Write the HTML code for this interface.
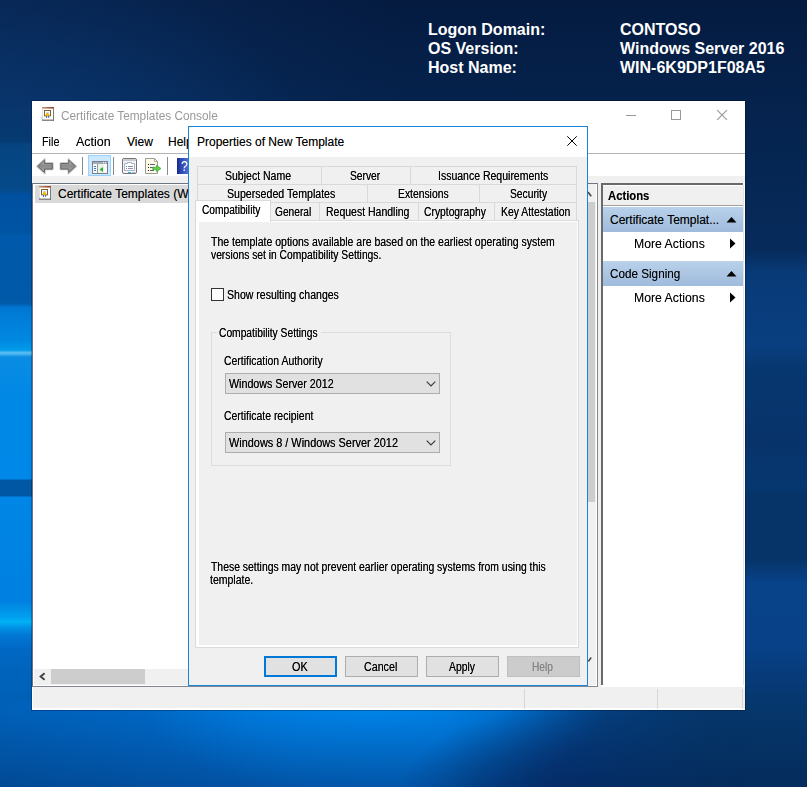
<!DOCTYPE html>
<html><head><meta charset="utf-8"><title>Certificate Templates Console</title>
<style>
*{box-sizing:border-box;margin:0;padding:0}
html,body{width:807px;height:787px;overflow:hidden}
body{position:relative;font-family:"Liberation Sans",sans-serif;font-size:12px;color:#000;background:#0a3a78}
.a{position:absolute}
.t{position:absolute;white-space:nowrap;transform-origin:0 0;line-height:1}
#bg{left:0;top:0;width:807px;height:787px;overflow:hidden}
/* BGInfo */
.bgi{font-weight:bold;font-size:16px;color:#fff;line-height:19px}
/* main window */
#win{left:32px;top:101px;width:713px;height:609px;background:#f0f0f0;box-shadow:0 0 0 1px rgba(0,5,30,.28)}
.seg{font-size:12px;text-shadow:0 0 0 rgba(0,0,0,.45)}
/* dialog */
#dlg{left:188px;top:126px;width:400px;height:560px;background:#f0f0f0;border:1px solid #1883d7}
.d{font-size:12px;transform:scaleX(.875);text-shadow:0 0 0 rgba(0,0,0,.75)}
.tab{position:absolute;height:19px;background:#f0f0f0;border:1px solid #d9d9d9;border-bottom:none}
.btn{position:absolute;top:656px;height:21px;width:73px;background:#e1e1e1;border:1px solid #adadad}
.combo{position:absolute;left:225px;width:215px;height:21px;background:#e1e1e1;border:1px solid #adadad}
</style></head><body>
<div id="bg" class="a">
<div class="a" style="left:0;top:0;width:807px;height:787px;background:linear-gradient(to bottom,#051b40 0,#05224c 100px,#062b5b 250px,#083a77 272px,#093f80 345px,#07376f 368px,#07336a 440px,#073770 489px,#063368 493px,#063469 560px,#084288 582px,#084187 650px,#073b7b 672px,#06376c 705px,#052c5c 787px)"></div>
<div class="a" style="left:0;top:0;width:420px;height:102px;background:linear-gradient(to right,rgba(16,76,150,.2) 0,rgba(16,76,150,.12) 200px,rgba(16,76,150,0) 400px),radial-gradient(ellipse 330px 230px at 0 190px,rgba(14,84,160,.42) 0,rgba(14,84,160,.22) 45%,rgba(14,84,160,0) 100%)"></div>
<div class="a" style="left:0;top:101px;width:34px;height:686px;background:linear-gradient(to bottom,#09346b 0,#06386f 25px,#053a72 40px,#064480 44px,#054a8a 89px,#0050a0 94px,#0054a4 131px,#0059aa 135px,#005aa8 202px,#0078d4 207px,#0088e0 239px,#009ae8 249px,#5fc0f5 252px,#0a8ce2 256px,#0088e6 300px,#0088e8 378px,#0058a4 379px,#0058a4 395px,#0086e6 396px,#0080e0 500px,#00a0ee 516px,#00b0f5 521px,#0090e4 527px,#0078d4 534px,#0068c4 549px,#0064bc 569px,#005eb4 609px,#004e9c 686px)"></div>
<div class="a" style="left:0;top:700px;width:807px;height:87px;-webkit-mask-image:linear-gradient(to right,#000 0,#000 560px,transparent 745px);mask-image:linear-gradient(to right,#000 0,#000 560px,transparent 745px);background:linear-gradient(to bottom,rgba(5,30,80,0) 10px,rgba(5,30,80,.34) 87px),radial-gradient(ellipse 170px 85px at 570px 92px,rgba(5,44,104,.75) 0,rgba(5,44,104,.4) 55%,rgba(5,44,104,0) 100%),radial-gradient(ellipse 230px 95px at 375px 6px,rgba(0,134,236,.9) 0,rgba(0,134,236,.5) 55%,rgba(0,134,236,0) 100%),linear-gradient(to right,#0060b8 0,#0067c4 150px,#006ed0 290px,#006ed0 440px,#005cb2 500px,#04468e 555px,#06376c 720px)"></div>
</div>

<!-- BGInfo text -->
<div class="t bgi" style="left:428px;top:20px">Logon Domain:<br>OS Version:<br>Host Name:</div>
<div class="t bgi" style="left:620px;top:20px">CONTOSO<br>Windows Server 2016<br>WIN-6K9DP1F08A5</div>

<svg width="0" height="0" style="position:absolute"><defs>
<g id="certico">
 <linearGradient id="brn" x1="0" y1="0" x2="1" y2="0"><stop offset="0" stop-color="#cf9471"/><stop offset="1" stop-color="#8c3d22"/></linearGradient>
 <path d="M2 9L0.300 12.600H2Z" fill="#d4d4d4"/>
 <rect x="2" y="2" width="12" height="12.900" fill="#fff"/>
 <rect x="2" y="1" width="12" height="1.600" fill="url(#brn)"/>
 <rect x="13.100" y="2.600" width=".9" height="12.300" fill="#6e6e6e"/>
 <rect x="2" y="2.600" width=".6" height="10.600" fill="#cfcfcf"/>
 <rect x="2.100" y="13.200" width="11.900" height="1.700" fill="#707070"/>
 <rect x="3" y="13.300" width="10" height=".8" fill="#dcdcdc"/>
 <rect x="4.500" y="4.500" width="6" height="5.300" fill="#fff" stroke="#80602e" stroke-width="1"/>
 <rect x="6.200" y="6" width="2.600" height=".5" fill="#7aa2ee"/>
 <rect x="6" y="10" width=".9" height="1.900" fill="#1f56d8"/><rect x="8.200" y="10" width=".9" height="1.900" fill="#1f56d8"/>
 <path d="M7.500 6.700L9.300 8.600L7.500 10.800L5.700 8.600Z" fill="#f2b200"/>
 <circle cx="7.500" cy="8.600" r="1.500" fill="#f5b800"/>
</g></defs></svg>

<!-- main window -->
<div id="win" class="a"></div>
<div class="a" style="left:32px;top:101px;width:713px;height:52px;background:#fff"></div>
<div class="a" style="left:32px;top:153px;width:713px;height:1px;background:#b4b4b4"></div>
<div class="a" style="left:32px;top:154px;width:713px;height:22px;background:#fff"></div>
<!-- title icon -->
<svg class="a" style="left:40px;top:106px" width="16" height="16" viewBox="0 0 16 16"><use href="#certico"/></svg>
<div class="t seg" id="ttl" style="left:61px;top:110px;color:#999;text-shadow:none;transform:scaleX(.985)">Certificate Templates Console</div>
<!-- window controls -->
<div class="a" style="left:626px;top:115px;width:10px;height:1px;background:#999"></div>
<div class="a" style="left:671px;top:110px;width:10px;height:10px;border:1px solid #999"></div>
<svg class="a" style="left:716px;top:109px" width="12" height="12" viewBox="0 0 12 12"><path d="M1.100 1.100L10.900 10.900M10.900 1.100L1.100 10.900" stroke="#999" stroke-width="1.100" fill="none"/></svg>
<!-- menu -->
<div class="t seg" id="m1" style="left:42px;top:136px;transform:scaleX(.9)">File</div>
<div class="t seg" id="m2" style="left:76px;top:136px;transform:scaleX(1.04)">Action</div>
<div class="t seg" id="m3" style="left:127px;top:136px">View</div>
<div class="t seg" id="m4" style="left:168px;top:136px">Help</div>
<!-- toolbar -->
<svg class="a" style="left:33px;top:154px" width="160" height="22" viewBox="33 154 160 22">
 <defs>
  <linearGradient id="ag" x1="0" y1="0" x2="0" y2="1"><stop offset="0" stop-color="#bcbcbc"/><stop offset=".45" stop-color="#8a8a8a"/><stop offset="1" stop-color="#a8a8a8"/></linearGradient>
  <linearGradient id="hg" x1="0" y1="0" x2="1" y2="0"><stop offset="0" stop-color="#17268a"/><stop offset=".25" stop-color="#2a45b0"/><stop offset="1" stop-color="#5d7fdc"/></linearGradient>
 </defs>
 <path d="M37 166.300L44.800 159V163H52.800V169.500H44.800V173.500Z" fill="url(#ag)" stroke="#bdbdbd" stroke-width="1.600" stroke-linejoin="round"/>
 <path d="M37.800 166.300L44.500 160.200V163.500H52.300V169H44.500V172.400Z" fill="url(#ag)" stroke="#666" stroke-width="1"/>
 <path d="M76.200 166.300L68.400 159V163H60.400V169.500H68.400V173.500Z" fill="url(#ag)" stroke="#bdbdbd" stroke-width="1.600" stroke-linejoin="round"/>
 <path d="M75.400 166.300L68.700 160.200V163.500H60.900V169H68.700V172.400Z" fill="url(#ag)" stroke="#666" stroke-width="1"/>
 <rect x="82" y="157" width="1" height="18" fill="#8a8a8a"/>
 <rect x="88.500" y="155.500" width="22" height="20" fill="#cce8ff" stroke="#99d1ff"/>
 <rect x="92.500" y="161.500" width="15" height="12" fill="#fafafa" stroke="#76808f"/>
 <rect x="93" y="162" width="14" height="2" fill="#a3abb8"/>
 <rect x="103" y="162" width="1" height="1" fill="#fff"/><rect x="105" y="162" width="1" height="1" fill="#fff"/>
 <rect x="94" y="166" width="2" height="1" fill="#3a78c9"/><rect x="94" y="168" width="2" height="1" fill="#3a78c9"/><rect x="94" y="170" width="2" height="1" fill="#3a78c9"/>
 <rect x="97" y="164" width="1" height="9" fill="#8f9aa8"/>
 <rect x="98" y="164" width="6" height="9" fill="#e9f3e6"/>
 <path d="M99.500 169.500L103 167V172Z" fill="#2faa3c"/>
 <rect x="113" y="157" width="1" height="18" fill="#8a8a8a"/>
 <rect x="122.500" y="158.500" width="14" height="15" rx="1.500" fill="#f4f5f8" stroke="#747474"/>
 <rect x="123" y="159" width="13" height="2" fill="#c9ccd3"/>
 <path d="M124.500 170.500V163.500H127.500V162.500H131.500V163.500H134.500V170.500Z" fill="#fff" stroke="#9aa1b4" stroke-width=".8"/>
 <rect x="126" y="166" width="1" height="1" fill="#1e9cf0"/><rect x="128" y="166" width="5" height="1" fill="#8c93a8"/>
 <rect x="126" y="168" width="1" height="1" fill="#8c93a8"/><rect x="128" y="168" width="5" height="1" fill="#8c93a8"/>
 <rect x="128" y="172" width="3" height="1" fill="#22b4f0"/><rect x="132" y="172" width="3" height="1" fill="#bbb"/>
 <path d="M145.500 158.500H154.500L157.500 161.500V173.500H145.500Z" fill="#fdf9e4" stroke="#9a9a90"/>
 <path d="M154.500 158.500V161.500H157.500" fill="none" stroke="#9a9a90" stroke-width=".8"/>
 <rect x="148" y="164" width="1" height="1" fill="#222"/><rect x="150" y="164" width="5" height="1" fill="#5c6088"/>
 <rect x="148" y="167" width="1" height="1" fill="#222"/><rect x="150" y="167" width="4" height="1" fill="#5c6088"/>
 <rect x="148" y="170" width="1" height="1" fill="#222"/><rect x="150" y="170" width="4" height="1" fill="#5c6088"/>
 <path d="M152.800 167.300H156.500V165.300L161 168.500L156.500 171.700V169.700H152.800Z" fill="#5fd04a" stroke="#36a52e" stroke-width=".7"/>
 <rect x="167" y="157" width="1" height="18" fill="#8a8a8a"/>
 <rect x="177" y="158" width="14" height="16" fill="url(#hg)"/>
</svg>
<div class="t" style="left:181px;top:158.500px;font-size:14.500px;color:#fff;transform:scaleX(.85)">?</div>
<!-- tree pane -->
<div class="a" style="left:32px;top:183px;width:566px;height:504px;background:#fff;border-top:1px solid #6d7585;border-left:1px solid #6d7585;border-right:1px solid #828790;border-bottom:1px solid #828790"></div>
<div class="a" style="left:35px;top:185px;width:560px;height:18px;background:#d9d9d9"></div>
<svg class="a" style="left:37px;top:185px" width="16" height="16" viewBox="0 0 16 16"><use href="#certico"/></svg>
<div class="t seg" id="tr1" style="left:58px;top:188px">Certificate Templates (WIN-6K9DP1F08A5)</div>
<!-- h scrollbar -->
<div class="a" style="left:34px;top:669px;width:554px;height:16px;background:#f0f0f0"></div>
<div class="a" style="left:51px;top:669px;width:94px;height:15px;background:#cdcdcd"></div>
<svg class="a" style="left:38px;top:672px" width="8" height="9" viewBox="0 0 8 9"><path d="M6.600 1.200L2.600 4.500L6.600 7.800" stroke="#404040" stroke-width="1.900" fill="none"/></svg>
<!-- v scrollbar sliver -->
<div class="a" style="left:588px;top:184px;width:8px;height:501px;background:#f0f0f0"></div>
<div class="a" style="left:588px;top:202px;width:7px;height:300px;background:#cdcdcd"></div>
<svg class="a" style="left:588px;top:191px" width="5" height="7" viewBox="0 0 5 7"><path d="M0 1L3.200 5.200" stroke="#505050" stroke-width="1.800" fill="none"/></svg>
<svg class="a" style="left:588px;top:656px" width="5" height="7" viewBox="0 0 5 7"><path d="M0.300 5.500L3.200 1.500" stroke="#505050" stroke-width="1.600" fill="none"/></svg>
<!-- actions pane -->
<div class="a" style="left:601px;top:183px;width:144px;height:504px;background:#fff"></div><div class="a" style="left:601px;top:183px;width:142px;height:502px;border-top:2px solid #6a6a6a;border-left:2px solid #6a6a6a"></div>
<div class="a" style="left:603px;top:186px;width:140px;height:19px;background:#f0f0f0"></div>
<div class="a" style="left:603px;top:205px;width:140px;height:1px;background:#a0a0a0"></div>
<div class="t seg" id="ac0" style="left:608px;top:190px;font-weight:bold;transform:scaleX(.94)">Actions</div>
<div class="a" style="left:603px;top:207px;width:140px;height:25px;background:linear-gradient(#b9d1ea,#9fbbdc)"></div>
<div class="t seg" id="ac1" style="left:610px;top:214px">Certificate Templat...</div>
<svg class="a" style="left:726px;top:216px" width="11" height="7" viewBox="0 0 11 7"><path d="M0.500 6.500L5.500 1L10.500 6.500Z" fill="#000"/></svg>
<div class="t seg" id="ac2" style="left:634px;top:238px;transform:scaleX(1.02)">More Actions</div>
<svg class="a" style="left:730px;top:238px" width="6" height="11" viewBox="0 0 6 11"><path d="M0 0.500L5.500 5.500L0 10.500Z" fill="#000"/></svg>
<div class="a" style="left:603px;top:261px;width:140px;height:25px;background:linear-gradient(#b9d1ea,#9fbbdc)"></div>
<div class="t seg" id="ac3" style="left:610px;top:268px;transform:scaleX(.975)">Code Signing</div>
<svg class="a" style="left:726px;top:270px" width="11" height="7" viewBox="0 0 11 7"><path d="M0.500 6.500L5.500 1L10.500 6.500Z" fill="#000"/></svg>
<div class="t seg" id="ac4" style="left:634px;top:292px;transform:scaleX(1.02)">More Actions</div>
<svg class="a" style="left:730px;top:292px" width="6" height="11" viewBox="0 0 6 11"><path d="M0 0.500L5.500 5.500L0 10.500Z" fill="#000"/></svg>
<div class="a" style="left:743px;top:185px;width:1px;height:500px;background:#e3e3e3"></div>
<!-- status bar -->
<div class="a" style="left:32px;top:708px;width:713px;height:2px;background:#fff"></div><div class="a" style="left:32px;top:687px;width:1px;height:23px;background:#fff"></div>
<div class="a" style="left:524px;top:689px;width:1px;height:20px;background:#d7d7d7"></div>
<div class="a" style="left:657px;top:689px;width:1px;height:20px;background:#d7d7d7"></div>
<div class="a" style="left:742px;top:689px;width:1px;height:20px;background:#d7d7d7"></div>


<!-- dialog -->
<div id="dlg" class="a"></div>
<div class="a" style="left:189px;top:127px;width:398px;height:30px;background:#fff"></div>
<div class="t seg" id="dt" style="left:197px;top:136px">Properties of New Template</div>
<svg class="a" style="left:566px;top:135px" width="12" height="12" viewBox="0 0 12 12"><path d="M1.300 1.300L10.700 10.700M10.700 1.300L1.300 10.700" stroke="#000" stroke-width="1" fill="none"/></svg>
<!-- tabs row1 -->
<div class="tab" style="left:197px;top:166px;width:125px"></div>
<div class="tab" style="left:321px;top:166px;width:90px"></div>
<div class="tab" style="left:410px;top:166px;width:167px"></div>
<div class="tab" style="left:197px;top:184px;width:171px"></div>
<div class="tab" style="left:367px;top:184px;width:113px"></div>
<div class="tab" style="left:479px;top:184px;width:98px"></div>
<div class="tab" style="left:197px;top:202px;width:74px;height:20px"></div>
<div class="tab" style="left:270px;top:202px;width:50px;height:20px"></div>
<div class="tab" style="left:319px;top:202px;width:100px;height:20px"></div>
<div class="tab" style="left:418px;top:202px;width:77px;height:20px"></div>
<div class="tab" style="left:494px;top:202px;width:83px;height:20px"></div>
<!-- page -->
<div class="a" style="left:195px;top:220px;width:384px;height:428px;background:#fff;border:1px solid #dadada"></div>
<div class="tab" style="left:195px;top:200px;width:76px;height:22px;background:#fff"></div>
<div class="a" style="left:199px;top:222px;width:378px;height:423px;background:#f0f0f0"></div>
<!-- labels -->
<div class="t d" style="left:224.6px;top:170px;transform:scaleX(0.876)">Subject Name</div>
<div class="t d" style="left:349.8px;top:170px;transform:scaleX(0.855)">Server</div>
<div class="t d" style="left:438.4px;top:170px;transform:scaleX(0.875)">Issuance Requirements</div>
<div class="t d" style="left:226.6px;top:188px;transform:scaleX(0.884)">Superseded Templates</div>
<div class="t d" style="left:397.5px;top:188px;transform:scaleX(0.862)">Extensions</div>
<div class="t d" style="left:509.6px;top:188px;transform:scaleX(0.856)">Security</div>
<div class="t d" style="left:202.400px;top:204px;transform:scaleX(0.849)">Compatibility</div>
<div class="t d" style="left:274.800px;top:206px;transform:scaleX(0.848)">General</div>
<div class="t d" style="left:325.8px;top:206px;transform:scaleX(0.874)">Request Handling</div>
<div class="t d" style="left:424.1px;top:206px;transform:scaleX(0.859)">Cryptography</div>
<div class="t d" style="left:500.9px;top:206px;transform:scaleX(0.867)">Key Attestation</div>
<!-- page content -->
<div class="t d" style="left:211px;top:236px;line-height:13px;transform:scaleX(.875)">The template options available are based on the earliest operating system</div>
<div class="t d" style="left:210.600px;top:249px;line-height:13px;transform:scaleX(.857)">versions set in Compatibility Settings.</div>
<div class="a" style="left:211px;top:288px;width:13px;height:13px;background:#fff;border:1px solid #333"></div>
<div class="t d" style="left:227px;top:289px;transform:scaleX(.878)">Show resulting changes</div>
<div class="a" style="left:211px;top:332px;width:240px;height:134px;border:1px solid #dcdcdc"></div>
<div class="a" style="left:217px;top:327px;width:104px;height:12px;background:#f0f0f0"></div>
<div class="t d" style="left:219.300px;top:327px;transform:scaleX(.855)">Compatibility Settings</div>
<div class="t d" style="left:224.200px;top:355px;transform:scaleX(.870)">Certification Authority</div>
<div class="combo" style="top:373px"></div>
<div class="t d" style="left:229px;top:378px;transform:scaleX(.891)">Windows Server 2012</div>
<svg class="a" style="left:426px;top:381px" width="10" height="6" viewBox="0 0 10 6"><path d="M0.700 0.600L5 4.900L9.300 0.600" stroke="#3c3c3c" stroke-width="1.250" fill="none"/></svg>
<div class="t d" style="left:224.200px;top:410px;transform:scaleX(.870)">Certificate recipient</div>
<div class="combo" style="top:432px"></div>
<div class="t d" style="left:229px;top:437px;transform:scaleX(.908)">Windows 8 / Windows Server 2012</div>
<svg class="a" style="left:426px;top:440px" width="10" height="6" viewBox="0 0 10 6"><path d="M0.700 0.600L5 4.900L9.300 0.600" stroke="#3c3c3c" stroke-width="1.250" fill="none"/></svg>
<div class="t d" style="left:210.600px;top:561px;line-height:13px;transform:scaleX(.867)">These settings may not prevent earlier operating systems from using this</div>
<div class="t d" style="left:210.300px;top:574px;line-height:13px;transform:scaleX(.875)">template.</div>
<!-- buttons -->
<div class="btn" style="left:264px;border:2px solid #0078d7"></div>
<div class="btn" style="left:345px"></div>
<div class="btn" style="left:426px"></div>
<div class="btn" style="left:507px;background:#ccc;border-color:#bfbfbf"></div>
<div class="t d" style="left:291.9px;top:661px;transform:scaleX(0.900)">OK</div>
<div class="t d" style="left:363.9px;top:661px;transform:scaleX(0.891)">Cancel</div>
<div class="t d" style="left:448.5px;top:661px;transform:scaleX(0.862)">Apply</div>
<div class="t d" style="left:531.7px;top:661px;transform:scaleX(0.846);color:#838383;text-shadow:0 0 0 rgba(131,131,131,.6)">Help</div>
</body></html>
